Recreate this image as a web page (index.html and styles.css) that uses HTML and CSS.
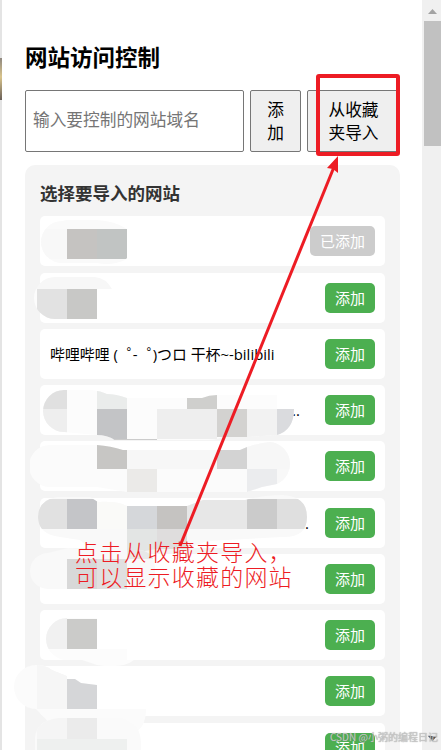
FILE: index.html
```html
<!DOCTYPE html>
<html lang="zh-CN">
<head>
    <meta charset="UTF-8">
    <meta name="viewport" content="width=device-width, initial-scale=1.0">
    <title>网站访问控制</title>
    <link rel="stylesheet" href="styles.css">
</head>
<body>
    <div class="edge"><i></i></div>
    <div class="container">
        <h2>网站访问控制</h2>
        <div class="input-group">
            <input type="text" id="domain" placeholder="输入要控制的网站域名">
            <button class="add">添加</button>
            <button class="import">从收藏夹导入</button>
        </div>

        <div class="bookmarks">
            <h3>选择要导入的网站</h3>
            <div class="item"><span></span><button class="btn added" disabled>已添加</button></div>
            <div class="item"><span></span><button class="btn">添加</button></div>
            <div class="item"><span>哔哩哔哩 (<i>゜</i>-<i>゜</i>)つロ 干杯~-bilibili</span><button class="btn">添加</button></div>
            <div class="item"><span class="dots dots-a">..</span><button class="btn">添加</button></div>
            <div class="item"><span></span><button class="btn">添加</button></div>
            <div class="item"><span class="dots">..</span><button class="btn">添加</button></div>
            <div class="item"><span></span><button class="btn">添加</button></div>
            <div class="item"><span></span><button class="btn">添加</button></div>
            <div class="item"><span></span><button class="btn">添加</button></div>
            <div class="item"><span></span><button class="btn">添加</button></div>
        </div>
    </div>
    <div class="scrollbar">
        <svg width="19" height="21" viewBox="0 0 19 21"><path d="M6 14 10.500 9 15 14z" fill="#a3a3a3"/></svg>
        <div class="thumb"></div>
        <svg class="down" width="19" height="21" viewBox="0 0 19 21"><path d="M6 7 10.500 12 15 7z" fill="#505050"/></svg>
    </div>

    <svg class="overlay" width="441" height="750" viewBox="0 0 441 750">
        <defs>
            <clipPath id="m1"><path d="M67 220H97Q115 221 127 229V258L125 260Q112 266 97 263H62A21 21 0 0 1 62 221z"/></clipPath>
            <clipPath id="m2"><path d="M55 277H95Q106 278 112 289H97V319H55A21 21 0 0 1 55 277z"/></clipPath>
            <clipPath id="m4"><path d="M64 390H92Q101 391 107 394Q116 394 127 398H202Q209 395 217 395H277V409H294Q294 430 277 435L247 437H222Q217 440 208 440H115Q107 435 97 435L64 432A21 21 0 0 1 64 390z"/></clipPath>
            <clipPath id="m5"><path d="M50 445H97Q111 446 123 450H240Q256 443 270 442A22 22 0 0 1 277 484L262 487L247 492H127L97 487H50A21 21 0 0 1 50 445z"/></clipPath>
            <clipPath id="m6"><path d="M57 497H90L98 502Q117 501 127 506H187L203 500H245Q265 495 282 495Q307 496 307 517T282 537L207 541L187 549H157L127 554H95L80 540L60 537Q38 534 38 517T57 497z"/></clipPath>
            <clipPath id="m7"><path d="M48 553 68 548 97 550H140Q155 552 155 569V585Q140 592 120 589H48A18 18 0 0 1 48 553z"/></clipPath>
            <clipPath id="m8"><path d="M67 618H97V649H127V660H134Q123 669 97 665L82 660H67A21 21 0 0 1 67 618z"/></clipPath>
            <clipPath id="m9"><path d="M36 665Q46 665 52 670L67 676V679H75L81 683L97 685V709H146Q146 729 132 734H60L36 709A22 22 0 0 1 36 665z"/></clipPath>
            <clipPath id="m10"><path d="M58 718H118Q141 721 141 744V750H35V738Q36 721 58 718z"/></clipPath>
        </defs>
        <g clip-path="url(#m1)">
            <path d="M37 220h90v50H37z" fill="#fafafa"/>
            <path d="M37 229h30v30H37z" fill="#f8f8f8"/>
            <path d="M67 229h30v30H67z" fill="#c5c3c1"/>
            <path d="M97 229h30v30H97z" fill="#c1c4c3"/>
        </g>
        <g clip-path="url(#m2)">
            <path d="M34 275h80v14H34z" fill="#f7f7f7"/>
            <path d="M34 289h3v30h-3z" fill="#fcfcfc"/>
            <path d="M37 289h30v30H37z" fill="#e2e2e2"/>
            <path d="M67 289h30v30H67z" fill="#c8c8c6"/>
        </g>
        <g clip-path="url(#m4)">
            <path d="M37 380h260v60H37z" fill="#fcfcfc"/>
            <path d="M37 379h30v30H37z" fill="#e0e0e0"/>
            <path d="M37 409h30v30H37zM157 409h60v30h-60z" fill="#eee"/>
            <path d="M97 379h30v30H97z" fill="#eaeceb"/>
            <path d="M97 409h30v31H97z" fill="#c3c4c6"/>
            <path d="M187 379h30v30h-30z" fill="#cfcfcd"/>
            <path d="M217 409h30v28h-30z" fill="#d3d2d0"/>
            <path d="M247 409h30v28h-30z" fill="#f2f2f2"/>
            <path d="M277 409h20v28h-20z" fill="#dadbde"/>
            <path d="M112 439h45v1h-45z" fill="#ccc"/>
        </g>
        <g clip-path="url(#m5)">
            <path d="M30 440h270v60H30z" fill="#fbfbfb"/>
            <path d="M127 439h90v30h-90zM247 439h50v30h-50z" fill="#f7f7f7"/>
            <path d="M97 439h30v30H97z" fill="#c7c6c4"/>
            <path d="M217 439h30v30h-30z" fill="#d3d3d3"/>
            <path d="M127 469h30v30h-30z" fill="#ebeae8"/>
            <path d="M247 469h30v30h-30z" fill="#ebecee"/>
            <path d="M277 469h22v30h-22z" fill="#f8f8f8"/>
        </g>
        <g clip-path="url(#m6)">
            <path d="M30 494h280v60H30z" fill="#f9f9f9"/>
            <path d="M30 499h37v30H30z" fill="#e1e1e1"/>
            <path d="M67 499h30v30H67z" fill="#c4c5c8"/>
            <path d="M97 499h30v30H97z" fill="#fafaf8"/>
            <path d="M127 499h30v30h-30z" fill="#d5d7da"/>
            <path d="M157 499h30v30h-30z" fill="#c5c3c1"/>
            <path d="M187 499h60v30h-60z" fill="#e7e7e7"/>
            <path d="M247 499h30v30h-30z" fill="#cbcbcb"/>
            <path d="M277 499h30v30h-30z" fill="#dfdfdf"/>
            <path d="M127 529h30v30h-30z" fill="#e3e5e4"/>
            <path d="M157 529h30v30h-30z" fill="#dfdddd"/>
        </g>
        <g clip-path="url(#m7)">
            <path d="M20 545h136v50H20z" fill="#f9f9f9"/>
            <path d="M67 559h30v30H67z" fill="#d8d8d8"/>
            <path d="M97 559h30v30H97z" fill="#e0e0e0"/>
            <path d="M127 550h28v9h-28z" fill="#e8e8e8"/>
        </g>
        <g clip-path="url(#m8)">
            <path d="M40 610h95v60H40z" fill="#fcfcfc"/>
            <path d="M40 610h27v39H40z" fill="#f1f1f1"/>
            <path d="M67 619h30v30H67z" fill="#cbcbc9"/>
        </g>
        <g clip-path="url(#m9)">
            <path d="M14 664h133v72H14z" fill="#fbfbfb"/>
            <path d="M37 664h30v45H37z" fill="#f6f6f6"/>
            <path d="M67 679h30v30H67z" fill="#d5d6d8"/>
        </g>
        <g clip-path="url(#m10)">
            <path d="M34 718h108v32H34z" fill="#fafafa"/>
            <path d="M37 718h30v21H37z" fill="#f5f5f5"/>
            <path d="M67 718h30v21H67z" fill="#ebebeb"/>
            <path d="M37 739h90v11H37z" fill="#eef0ef"/>
        </g>
        <rect x="318" y="76" width="80" height="78" rx="1" fill="none" stroke="#ed1c24" stroke-width="4"/>
        <path d="M180 546 334 167" stroke="#ed1c24" stroke-width="3"/>
        <path d="M338 156V173L333 169 327 168z" fill="#ed1c24"/>
    </svg>
    <div class="note">点击从收藏夹导入，<br>可以显示收藏的网站</div>
    <div class="watermark">CSDN @小粥的编程日记</div>
</body>
</html>
```
FILE: styles.css
```css
* {
    box-sizing: border-box;
}

body {
    margin: 0;
    height: 750px;
    display: flex;
    position: relative;
    overflow: hidden;
    background: #fff;
    font-family: "Noto Sans CJK SC", sans-serif;
}

.edge {
    width: 2px;
    height: 750px;
    padding-top: 58px;
    background: #e4e4e4;
}

.edge i {
    display: block;
    height: 42px;
    background: linear-gradient(#8f8880, #d9c48c 45%, #695f58);
}

.container {
    width: 420px;
    padding: 0 22px 0 23px;
}

h2 {
    margin: 38px 0 16px;
    font-size: 22.5px;
    line-height: 36px;
}

.input-group {
    display: flex;
    gap: 6px;
    height: 62px;
}

.input-group input,
.input-group button {
    border: 1px solid #767676;
    border-radius: 2px;
    font-family: inherit;
    font-size: 16.7px;
}

.input-group input {
    width: 219px;
    padding: 0 7px 4px;
    outline: none;
}

.input-group input::placeholder {
    color: #757575;
}

.input-group button {
    padding: 0;
    line-height: 23px;
    background: #efefef;
    color: #000;
}

.input-group .add {
    width: 51px;
    padding: 0 16px 1px;
}

.input-group .import {
    width: 93px;
    padding: 0 20px 1px;
}

.bookmarks {
    margin-top: 13px;
    padding: 15px;
    height: 620px;
    background: #f4f4f4;
    border-radius: 10px;
}

.bookmarks h3 {
    margin: 0 0 10.4px;
    font-size: 17.5px;
    line-height: 26px;
    color: #333;
}

.item {
    display: flex;
    align-items: center;
    justify-content: space-between;
    height: 50px;
    margin-bottom: 6.25px;
    padding: 0 10px;
    background: #fff;
    border-radius: 5px;
    font-size: 15px;
}

.item span {
    white-space: nowrap;
    font-family: "Open Sans", "Noto Sans CJK SC", sans-serif;
    font-size: 14.9px;
}

/* semi-voiced marks sit at the right of their cell */
.item span i {
    display: inline-block;
    width: 15px;
    text-indent: 9px;
    font-style: normal;
}

.item .dots {
    margin-left: 251px;
}

.item .dots-a {
    margin-left: 242px;
}

.btn {
    height: 30px;
    padding: 0 10px;
    border: none;
    border-radius: 5px;
    background: #4caf50;
    color: #fff;
    font-family: inherit;
    font-size: 15px;
    line-height: 30px;
}

.btn.added {
    background: #ccc;
}

.scrollbar {
    display: flex;
    flex-direction: column;
    width: 19px;
    height: 750px;
    background: #f0f0f0;
}

.thumb {
    height: 125px;
    margin-left: 2px;
    background: #c1c1c1;
}

.scrollbar .down {
    margin-top: auto;
}

.overlay {
    position: absolute;
    left: 0;
    top: 0;
}

.note {
    position: absolute;
    left: 75px;
    top: 539px;
    color: #ed1c24;
    font-size: 23px;
    font-weight: 300;
    letter-spacing: 1.2px;
    line-height: 25px;
    white-space: nowrap;
}

.watermark {
    position: absolute;
    left: 330px;
    top: 729px;
    color: rgba(210, 210, 210, 0.85);
    font-size: 10px;
    line-height: 16px;
    text-shadow: 0 0 1px #888;
    white-space: nowrap;
}
```
